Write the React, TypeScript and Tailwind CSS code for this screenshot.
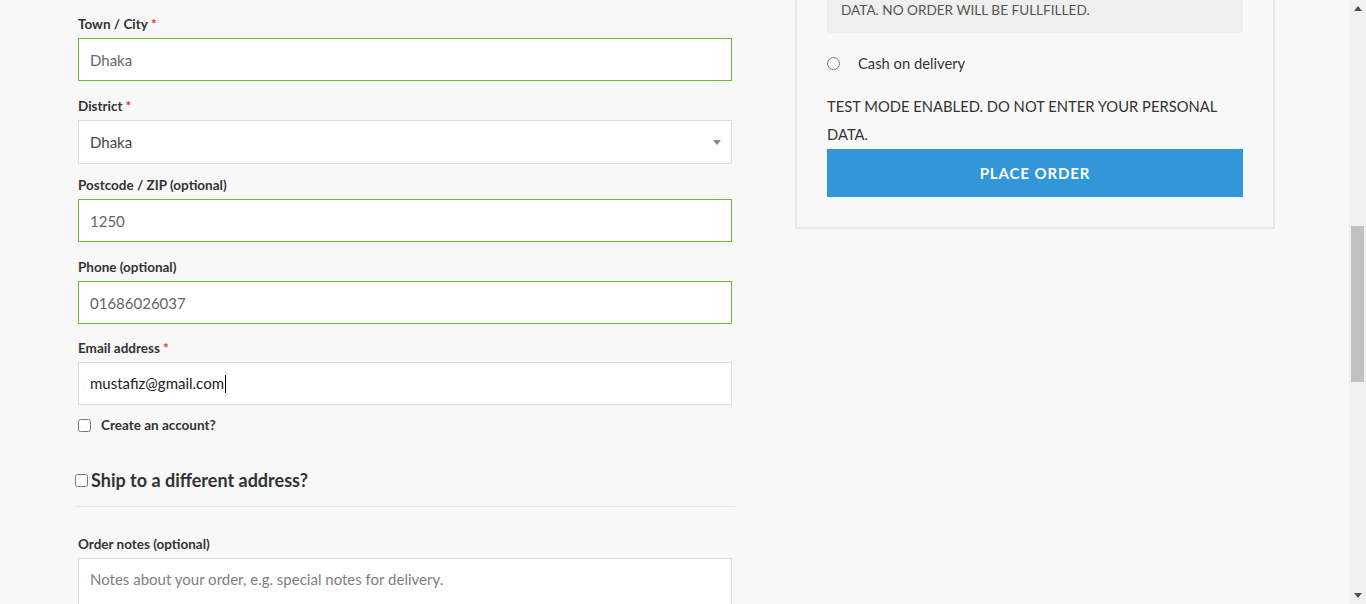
import type { ReactNode } from "react";

const Label = ({ text, required, className = "mb-[4px]" }: { text: string; required?: boolean; className?: string }) => (
  <label className={`block text-[13.5px] font-bold leading-5 text-[#333] ${className}`}>
    {text}
    {required && <span className="ml-[3px] text-[#e2401c]">*</span>}
  </label>
);

const Field = ({
  label,
  required,
  children,
  className = "mb-[15px]",
}: {
  label: string;
  required?: boolean;
  children: ReactNode;
  className?: string;
}) => (
  <div className={className}>
    <Label text={label} required={required} />
    {children}
  </div>
);

const TextInput = ({ value, valid }: { value: string; valid?: boolean }) => (
  <input
    readOnly
    value={value}
    className={`block h-[43px] w-full border bg-white px-[11px] text-[15px] outline-none ${
      valid ? "border-[#6dc02d] text-[#666]" : "border-[#ddd] text-[#333]"
    }`}
  />
);

const ScrollArrow = ({ down }: { down?: boolean }) => (
  <div className="flex h-[17px] items-center justify-center">
    <svg width="8" height="5" viewBox="0 0 8 5" className={down ? "rotate-180" : ""}>
      <path d="M4 0 L8 5 L0 5 Z" fill="#505050" />
    </svg>
  </div>
);

const Scrollbar = () => (
  <div className="flex w-[17px] shrink-0 flex-col bg-[#f1f1f1]">
    <ScrollArrow />
    <div className="flex-1 px-[2px]">
      <div className="mt-[209px] h-[156px] bg-[#c1c1c1]" />
    </div>
    <ScrollArrow down />
  </div>
);

const App = () => {
  return (
    <div className="flex h-[604px] overflow-hidden bg-[#f8f8f8] font-[family-name:Lato,sans-serif]">
      <div className="flex-1 overflow-hidden">
        <div className="ml-[75px] flex w-[1200px] items-start gap-[60px]">
          {/* Billing form */}
          <div className="w-[660px] pt-[14px]">
            <div className="px-[3px]">
              <Field label="Town / City" required>
                <TextInput value="Dhaka" valid />
              </Field>
              <Field label="District" required className="mb-[11px]">
                <div className="flex h-[44px] items-center justify-between border border-[#ddd] bg-white pl-[11px] pr-[10px]">
                  <span className="text-[15px] text-[#444]">Dhaka</span>
                  <span className="border-x-[4px] border-t-[5px] border-x-transparent border-t-[#888]" />
                </div>
              </Field>
              <Field label="Postcode / ZIP (optional)">
                <TextInput value="1250" valid />
              </Field>
              <Field label="Phone (optional)" className="mb-[14px]">
                <TextInput value="01686026037" valid />
              </Field>
              <Field label="Email address" required className="mb-0">
                <div className="flex h-[43px] items-center border border-[#ddd] bg-white px-[11px] text-[15px] text-[#222]">
                  mustafiz@gmail.com
                  <span className="ml-px inline-block h-[18px] w-px bg-black" />
                </div>
              </Field>
              <label className="mt-[10px] flex h-5 items-center gap-[10px] text-[13.5px] font-bold text-[#333]">
                <input type="checkbox" className="m-0 h-[13px] w-[13px]" />
                Create an account?
              </label>
            </div>

            <h3 className="mt-[31px] flex items-center gap-[3px] border-b border-[#e6e6e6] pb-[12px] text-[18px] font-bold leading-7 text-[#333]">
              <input type="checkbox" className="m-0 h-[13px] w-[13px]" />
              Ship to a different address?
            </h3>

            <div className="mt-[27px] px-[3px]">
              <Label text="Order notes (optional)" className="mb-[4px]" />
              <textarea
                readOnly
                placeholder="Notes about your order, e.g. special notes for delivery."
                className="block h-[90px] w-full resize-none border border-[#ddd] bg-white px-[11px] py-[9px] text-[15px] text-[#333] outline-none placeholder:text-[#808080]"
              />
            </div>
          </div>

          {/* Order review / payment */}
          <div className="-mt-[68px] w-[480px] border-2 border-[#e8e8e8] p-[30px]">
            <div className="rounded-[3px] bg-[#efefef] px-[14px] pt-[10px] pb-[11px] text-[13.6px] leading-6 text-[#555]">
              TEST MODE ENABLED. DO NOT ENTER YOUR PERSONAL DATA. NO ORDER WILL BE FULLFILLED.
            </div>
            <label className="mt-[16px] flex h-7 items-center gap-[18px] text-[14.75px] text-[#333]">
              <input type="radio" name="payment" className="m-0 h-[13px] w-[13px]" />
              Cash on delivery
            </label>
            <p className="mt-[15px] text-[14.75px] leading-7 text-[#333]">
              TEST MODE ENABLED. DO NOT ENTER YOUR PERSONAL DATA.
            </p>
            <button className="mt-px flex h-[48px] w-full items-center justify-center bg-[#3197d8] text-[15px] font-bold tracking-[0.9px] text-white">
              PLACE ORDER
            </button>
          </div>
        </div>
      </div>
      <Scrollbar />
    </div>
  );
};

export default App;
